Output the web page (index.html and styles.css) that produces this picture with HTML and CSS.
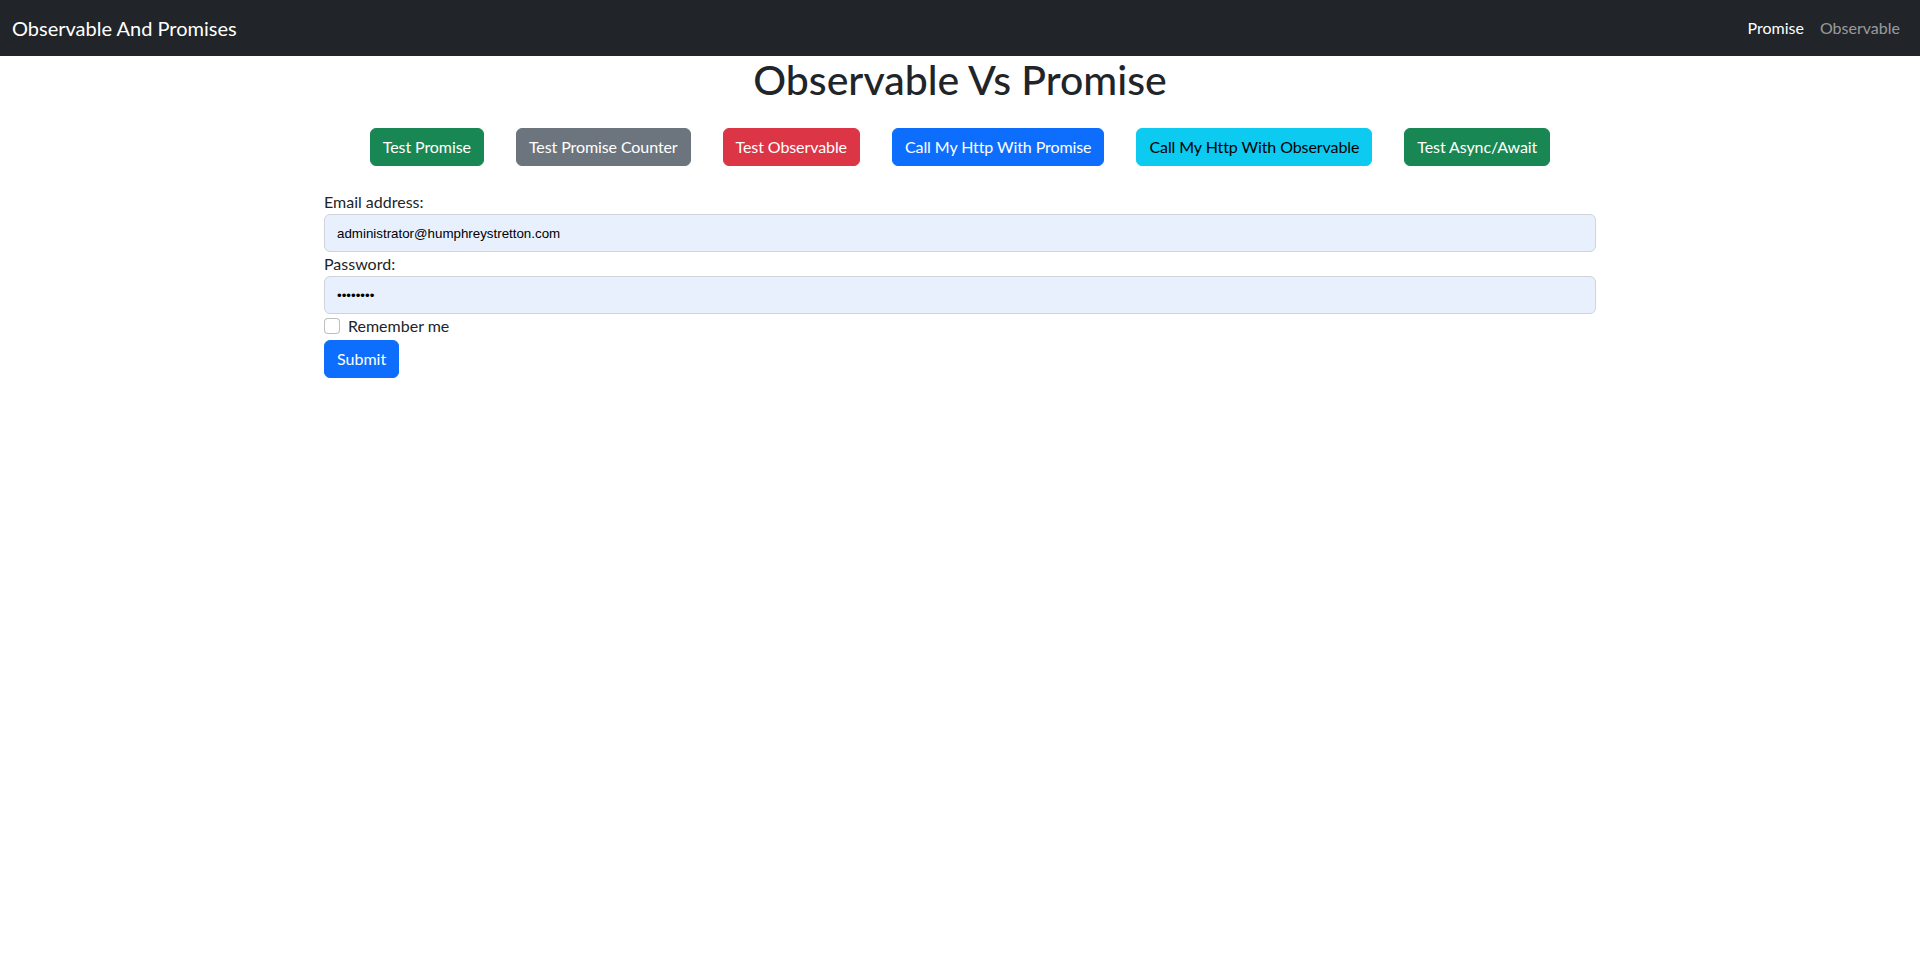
FILE: index.html
```html
<!DOCTYPE html>
<html>
<head>
<meta charset="utf-8">
<link rel="stylesheet" href="styles.css">
</head>
<body>
<nav class="navbar">
  <a class="brand" href="#">Observable And Promises</a>
  <div class="nav-links">
    <a class="nav-link active" href="#">Promise</a>
    <a class="nav-link" href="#">Observable</a>
  </div>
</nav>
<main class="container">
  <h1 class="title">Observable Vs Promise</h1>
  <div class="actions">
    <button class="btn btn-success">Test Promise</button>
    <button class="btn btn-secondary">Test Promise Counter</button>
    <button class="btn btn-danger">Test Observable</button>
    <button class="btn btn-primary">Call My Http With Promise</button>
    <button class="btn btn-info">Call My Http With Observable</button>
    <button class="btn btn-success">Test Async/Await</button>
  </div>
  <form class="login">
    <label class="form-label" for="email">Email address:</label>
    <input class="form-control autofill" id="email" type="email" value="administrator@humphreystretton.com">
    <label class="form-label" for="pwd">Password:</label>
    <input class="form-control autofill" id="pwd" type="password" value="password">
    <div class="form-check">
      <input class="check" type="checkbox" id="remember">
      <label for="remember">Remember me</label>
    </div>
    <button type="button" class="btn btn-primary">Submit</button>
  </form>
</main>
</body>
</html>
```

FILE: styles.css
```css
* { box-sizing: border-box; }
body {
  margin: 0;
  font-family: Lato, "Noto Sans", sans-serif;
  font-size: 16px;
  line-height: 1.5;
  color: #212529;
  background: #fff;
}
.navbar {
  background: #212529;
  height: 56px;
  padding: 8px 12px;
  display: flex;
  align-items: center;
  justify-content: space-between;
}
.brand {
  color: #fff;
  font-size: 20px;
  line-height: 30px;
  text-decoration: none;
}
.nav-links { display: flex; }
.nav-link {
  color: rgba(255,255,255,.55);
  text-decoration: none;
  padding: 8px;
  line-height: 24px;
}
.nav-link.active { color: #fff; }
.container {
  width: 1320px;
  margin: 0 auto;
  padding: 0 12px;
}
.title {
  margin: 0 0 8px;
  font-size: 41px;
  font-weight: 500;
  line-height: 48px;
  text-align: center;
}
.actions {
  display: flex;
  justify-content: center;
  gap: 32px;
  margin: 24px 0 24px;
}
.btn {
  font-family: inherit;
  font-size: 16px;
  line-height: 24px;
  padding: 6px 12px;
  border: 1px solid transparent;
  border-radius: 6px;
  color: #fff;
  cursor: pointer;
}
.actions .btn { letter-spacing: -0.09px; }
.btn-success { background: #198754; border-color: #198754; }
.btn-secondary { background: #6c757d; border-color: #6c757d; }
.btn-danger { background: #dc3545; border-color: #dc3545; }
.btn-primary { background: #0d6efd; border-color: #0d6efd; }
.btn-info { background: #0dcaf0; border-color: #0dcaf0; color: #000; }
.login {
  padding: 0 12px;
  display: flex;
  flex-direction: column;
  align-items: flex-start;
}
.form-label { display: block; line-height: 24px; }
.form-control {
  display: block;
  width: 100%;
  height: 38px;
  padding: 6px 12px;
  border: 1px solid #ced4da;
  border-radius: 6px;
  font-size: 13.333px;
  font-family: "Liberation Sans", Arial, sans-serif;
  color: #000;
}
.autofill { background: #e8f0fe; }
.form-check {
  display: flex;
  align-items: center;
  gap: 8px;
  height: 24px;
  margin-bottom: 2px;
}
.check {
  appearance: none;
  width: 16px;
  height: 16px;
  margin: 0;
  border: 1px solid rgba(0,0,0,.25);
  border-radius: 4px;
  background: #fff;
}
```
